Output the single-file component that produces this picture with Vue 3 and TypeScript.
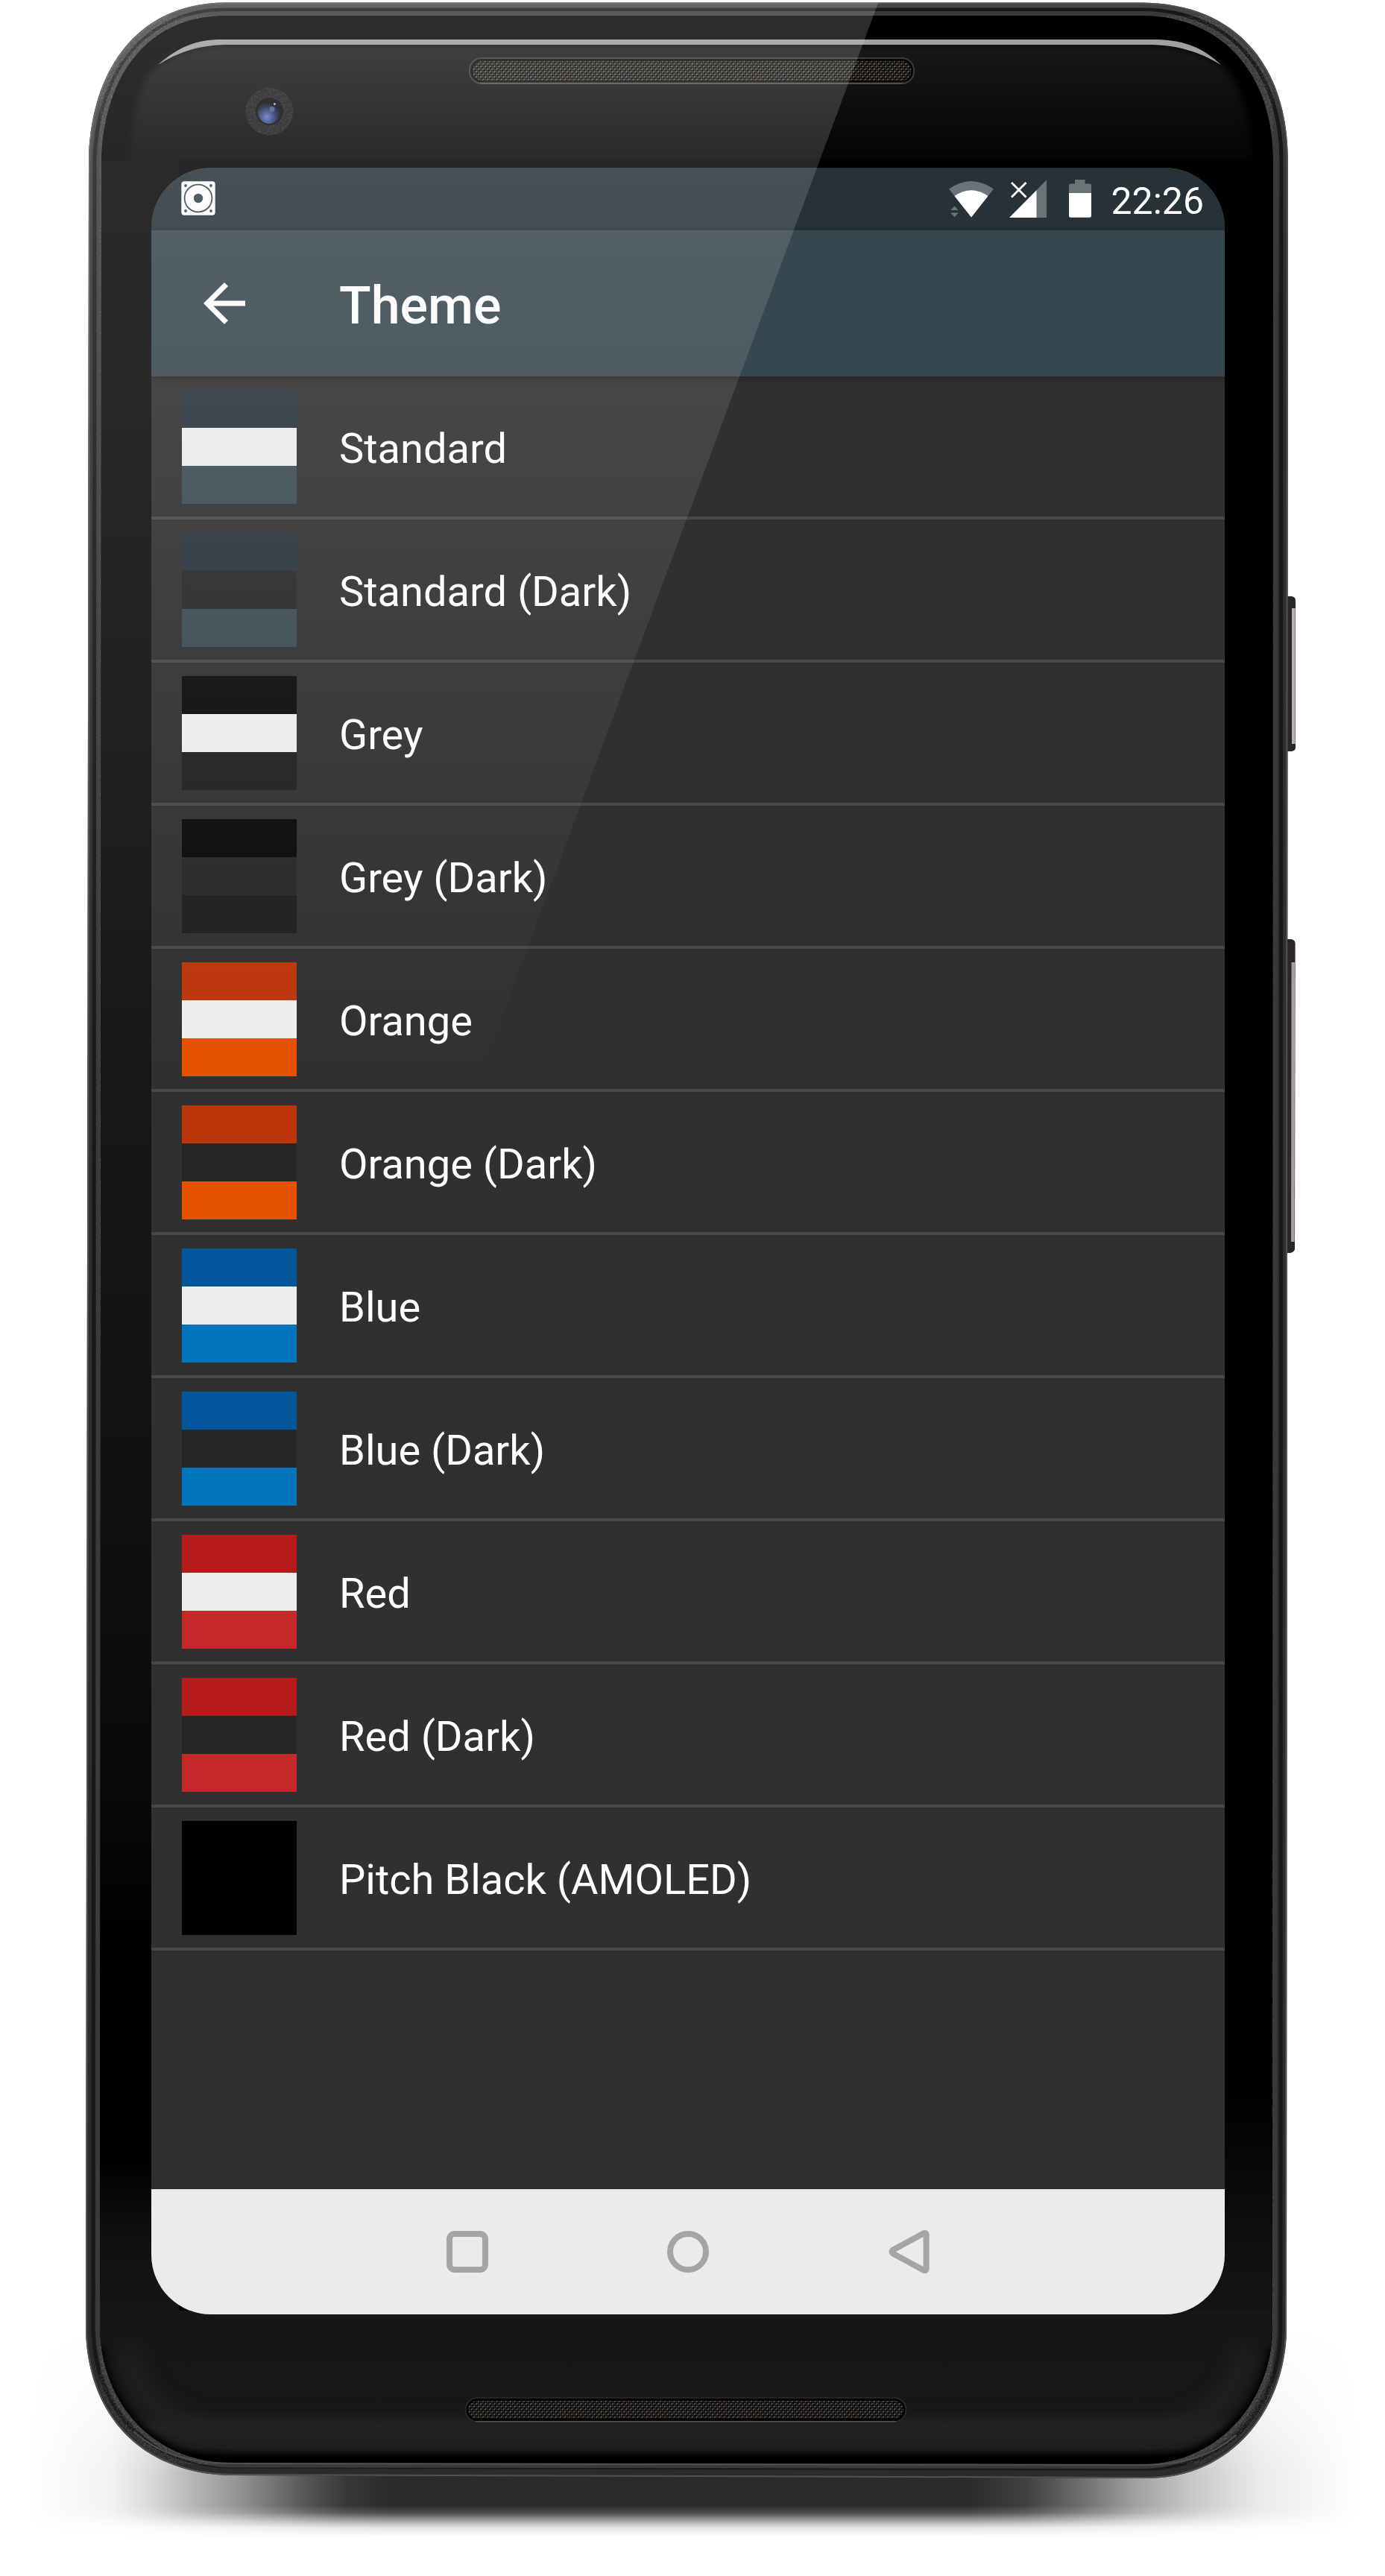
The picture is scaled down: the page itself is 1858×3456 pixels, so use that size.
<script setup lang="ts">
interface Theme {
  name: string
  stripes: [string, string, string]
}

const light = '#eeeeee'
const dark = '#272727'

const themes: Theme[] = [
  { name: 'Standard', stripes: ['#28323c', light, '#3a4a52'] },
  { name: 'Standard (Dark)', stripes: ['#28323c', dark, '#3a4a52'] },
  { name: 'Grey', stripes: ['#0a0a0a', light, '#1f1f1f'] },
  { name: 'Grey (Dark)', stripes: ['#090909', dark, '#1e1e1e'] },
  { name: 'Orange', stripes: ['#bc350a', light, '#e65100'] },
  { name: 'Orange (Dark)', stripes: ['#bc350a', dark, '#e65100'] },
  { name: 'Blue', stripes: ['#01569c', light, '#0176be'] },
  { name: 'Blue (Dark)', stripes: ['#01569c', dark, '#0176be'] },
  { name: 'Red', stripes: ['#b41b19', light, '#c42829'] },
  { name: 'Red (Dark)', stripes: ['#b41b19', dark, '#c42829'] },
  { name: 'Pitch Black (AMOLED)', stripes: ['#000000', '#000000', '#000000'] },
]

const shell =
  'M119 215 C121 100 180 3.5 303 3.5 H1533 C1660 5 1728 90 1728 215 L1726 3130 C1722 3235 1652 3325 1538 3325 L315 3321 C190 3321 118 3240 115 3127 Z'
const groove =
  'M127 215 C129 108 188 13 303 13 H1533 C1652 14 1719 98 1719 215 L1718 3130 C1714 3232 1646 3312 1536 3312 L315 3309 C198 3309 128 3234 125 3127 Z'
const face =
  'M136 215 C139 104 196 21 303 21 H1533 C1644 22 1708 104 1708 215 L1707 3130 C1703 3222 1636 3306 1530 3306 L315 3304.5 C206 3304.5 138 3226 134 3127 Z'
</script>

<template>
  <main class="stage">
    <svg class="art" viewBox="0 0 1858 3456" aria-hidden="true">
      <defs>
        <linearGradient id="shadowX">
          <stop offset="0.02" stop-color="#000" stop-opacity="0" />
          <stop offset="0.08" stop-color="#000" stop-opacity="0.05" />
          <stop offset="0.11" stop-color="#000" stop-opacity="0.15" />
          <stop offset="0.14" stop-color="#000" stop-opacity="0.29" />
          <stop offset="0.17" stop-color="#000" stop-opacity="0.41" />
          <stop offset="0.2" stop-color="#000" stop-opacity="0.56" />
          <stop offset="0.225" stop-color="#000" stop-opacity="0.68" />
          <stop offset="0.25" stop-color="#000" stop-opacity="0.78" />
          <stop offset="0.28" stop-color="#000" stop-opacity="0.83" />
          <stop offset="0.7" stop-color="#000" stop-opacity="0.83" />
          <stop offset="0.74" stop-color="#000" stop-opacity="0.75" />
          <stop offset="0.785" stop-color="#000" stop-opacity="0.55" />
          <stop offset="0.82" stop-color="#000" stop-opacity="0.37" />
          <stop offset="0.86" stop-color="#000" stop-opacity="0.22" />
          <stop offset="0.91" stop-color="#000" stop-opacity="0.08" />
          <stop offset="0.98" stop-color="#000" stop-opacity="0" />
        </linearGradient>
        <linearGradient id="shadowY" gradientUnits="userSpaceOnUse" x1="0" y1="3120" x2="0" y2="3404">
          <stop offset="0" stop-color="#fff" stop-opacity="0" />
          <stop offset="0.35" stop-color="#fff" stop-opacity="0.35" />
          <stop offset="0.7" stop-color="#fff" stop-opacity="1" />
          <stop offset="0.85" stop-color="#fff" stop-opacity="1" />
          <stop offset="0.885" stop-color="#fff" stop-opacity="0.84" />
          <stop offset="0.92" stop-color="#fff" stop-opacity="0.46" />
          <stop offset="0.955" stop-color="#fff" stop-opacity="0.12" />
          <stop offset="1" stop-color="#fff" stop-opacity="0" />
        </linearGradient>
        <mask id="shadowMask" maskUnits="userSpaceOnUse" x="0" y="3100" width="1858" height="320">
          <rect y="3100" width="1858" height="320" fill="url(#shadowY)" />
        </mask>
        <linearGradient id="rim" x1="0" y1="0" x2="0" y2="1">
          <stop offset="0" stop-color="#434343" />
          <stop offset="0.12" stop-color="#2e2e2e" />
          <stop offset="0.4" stop-color="#303030" />
          <stop offset="1" stop-color="#2b2b2b" />
        </linearGradient>
        <linearGradient id="leftBezel" gradientUnits="userSpaceOnUse" x1="0" y1="215" x2="0" y2="3130">
          <stop offset="0" stop-color="#050505" />
          <stop offset="0.1" stop-color="#0d0d0d" />
          <stop offset="0.3" stop-color="#151515" />
          <stop offset="0.44" stop-color="#171717" />
          <stop offset="0.61" stop-color="#111" />
          <stop offset="0.75" stop-color="#090909" />
          <stop offset="0.82" stop-color="#000" />
          <stop offset="0.92" stop-color="#000" />
          <stop offset="0.96" stop-color="#111" />
          <stop offset="1" stop-color="#161616" />
        </linearGradient>
        <linearGradient id="rightBezel" gradientUnits="userSpaceOnUse" x1="0" y1="2800" x2="0" y2="3130">
          <stop offset="0" stop-color="#000" />
          <stop offset="0.7" stop-color="#111" />
          <stop offset="1" stop-color="#151515" />
        </linearGradient>
        <linearGradient id="chin" gradientUnits="userSpaceOnUse" x1="0" y1="3100" x2="0" y2="3305">
          <stop offset="0" stop-color="#161616" />
          <stop offset="0.66" stop-color="#171717" />
          <stop offset="0.77" stop-color="#232323" />
          <stop offset="0.9" stop-color="#1c1c1c" />
          <stop offset="0.96" stop-color="#020202" />
          <stop offset="1" stop-color="#000" />
        </linearGradient>
        <linearGradient id="brow" gradientUnits="userSpaceOnUse" x1="0" y1="60" x2="0" y2="215">
          <stop offset="0" stop-color="#181818" />
          <stop offset="1" stop-color="#040404" />
        </linearGradient>
        <radialGradient id="lens" cx="0.4" cy="0.72" r="0.62">
          <stop offset="0" stop-color="#6279c4" />
          <stop offset="0.35" stop-color="#3c4d93" />
          <stop offset="0.75" stop-color="#171b38" />
          <stop offset="1" stop-color="#08080f" />
        </radialGradient>
        <pattern id="weave" width="6.1" height="7" patternUnits="userSpaceOnUse">
          <path d="M0.6 2.8 L2.4 0.6 M3.7 6.3 L5.5 4.1" stroke="#807867" stroke-width="1.45" />
          <path d="M3.6 0.6 L5.2 2.8 M0.6 4.1 L2.2 6.3" stroke="#423f37" stroke-width="1.2" />
        </pattern>
        <filter id="soft" x="-5%" y="-5%" width="110%" height="110%" color-interpolation-filters="sRGB">
          <feGaussianBlur stdDeviation="5" />
        </filter>
        <filter id="softWide" x="-10%" y="-30%" width="120%" height="160%" color-interpolation-filters="sRGB">
          <feGaussianBlur stdDeviation="12" />
        </filter>
        <filter id="grain" x="0" y="0" width="100%" height="100%">
          <feTurbulence type="fractalNoise" baseFrequency="0.45" numOctaves="2" seed="4" />
          <feColorMatrix values="0 0 0 0 1  0 0 0 0 1  0 0 0 0 1  1.6 0 0 0 -0.65" />
          <feComposite in2="SourceGraphic" operator="in" />
        </filter>
        <clipPath id="faceClip"><path :d="face" /></clipPath>
        <clipPath id="shellClip"><path :d="shell" /></clipPath>
        <clipPath id="browClip"><rect x="130" y="20" width="1580" height="195" /></clipPath>
      </defs>

      <rect y="3110" width="1858" height="300" fill="url(#shadowX)" mask="url(#shadowMask)" />

      <!-- side keys -->
      <g>
        <path d="M1726 800 H1733 Q1738 801 1738 806 V1003 Q1738 1007 1733 1008 H1726 Z" fill="#2b2628" />
        <rect x="1733" y="816" width="4.6" height="182" fill="#b9aeb0" />
        <path d="M1725 1260 H1732 Q1737.6 1261 1737.6 1266 L1737 1676 Q1736 1680 1731 1681 H1725 Z" fill="#2b2628" />
        <path d="M1732.5 1291 H1737.2 L1736.6 1666 H1732 Z" fill="#a89da0" />
      </g>

      <path :d="shell" fill="url(#rim)" />
      <g clip-path="url(#shellClip)">
        <path :d="shell" fill="none" stroke="#505252" stroke-width="4" />
        <path :d="groove" fill="none" stroke="#181818" stroke-width="5" />
        <path :d="face" fill="none" stroke="#3a3a3a" stroke-width="12" />
        <path :d="face" fill="none" stroke="#fff" stroke-width="34" filter="url(#grain)" opacity="0.25" />
      </g>

      <path :d="face" fill="#000" />
      <g clip-path="url(#faceClip)">
        <rect x="100" y="215" width="140" height="2915" fill="url(#leftBezel)" />
        <rect x="1600" y="2800" width="140" height="330" fill="url(#rightBezel)" />
        <rect x="100" y="3100" width="1640" height="210" fill="url(#chin)" />
        <path
          d="M172 3150 C178 3215 225 3262 315 3262 H1530 C1615 3262 1664 3215 1670 3150"
          fill="none" stroke="#222" stroke-width="24" filter="url(#softWide)"
        />
        <path
          d="M130 3150 C140 3232 206 3307 315 3307 H1530 C1636 3307 1700 3226 1711 3150"
          fill="none" stroke="#000" stroke-width="18" filter="url(#soft)"
        />
        <g clip-path="url(#browClip)">
          <path
            d="M174 260 C174 150 188 104 212 87 C240 69 268 60 300 60 H1540 C1580 60 1610 70 1638 87 C1666 110 1681 160 1682 260 Z"
            fill="url(#brow)" filter="url(#soft)"
          />
        </g>
        <rect x="290" y="48" width="1262" height="5" fill="#000" />
      </g>
      <path d="M179 3262 C210 3290 250 3305 315 3305 L1530 3307 C1585 3307 1625 3296 1658 3267" fill="none" stroke="#505050" stroke-width="2" />
      <path
        d="M212 87 C238 64 262 53 297 53 H1552 C1592 54 1616 66 1638 87 C1610 70 1580 60 1540 60 H300 C268 61 240 69 212 87 Z"
        fill="#a0a0a0"
      />

      <!-- front camera -->
      <circle cx="361.4" cy="149.5" r="32" fill="#191617" />
      <circle cx="361.4" cy="149.5" r="32" fill="#fff" filter="url(#grain)" opacity="0.16" />
      <circle cx="361.4" cy="149.5" r="18.5" fill="#090909" />
      <ellipse cx="361" cy="150" rx="15.5" ry="16" fill="url(#lens)" />
      <circle cx="365" cy="146.5" r="3.5" fill="#4d6a91" opacity="0.8" />
      <circle cx="368.4" cy="139.6" r="1.4" fill="#e9b6dc" />

      <!-- speakers -->
      <rect x="630" y="78" width="596" height="34" rx="16" fill="#060606" stroke="#3a3a3a" stroke-width="2" />
      <path d="M644 111.5 H1212" stroke="#5a5954" stroke-width="1.5" />
      <rect x="634" y="82" width="588" height="26" rx="12" fill="url(#weave)" />
      <rect x="624.5" y="3217" width="591" height="32" rx="16" fill="#050505" stroke="#2d2d2d" stroke-width="1.6" />
      <path d="M638 3248.8 H1202" stroke="#56504c" stroke-width="1.5" />
      <rect x="628" y="3221" width="584" height="24" rx="12" fill="url(#weave)" opacity="0.9" />
    </svg>

    <section class="screen">
      <header class="status">
        <svg class="app-mark" viewBox="0 0 46 46">
          <rect x="0.3" y="0.3" width="45.4" height="45.4" rx="4" fill="#fff" />
          <g fill="#36434a">
            <circle cx="6" cy="6" r="1.9" />
            <circle cx="40" cy="6" r="1.9" />
            <circle cx="6" cy="40" r="1.9" />
            <circle cx="40" cy="40" r="1.9" />
            <circle cx="23" cy="23" r="6.2" />
          </g>
          <circle cx="23" cy="23" r="18.4" fill="none" stroke="#36434a" stroke-width="1.8" />
        </svg>
        <div class="indicators">
          <svg class="wifi" viewBox="0 0 62 52">
            <path d="M1 13.5 Q31 -7.5 61 13.5 L31 51.5 Z" fill="#6b7376" />
            <path d="M8.5 23 Q31 7.5 53.5 23 L31 51.5 Z" fill="#fff" />
            <path d="M8.5 36.5 L13.7 42 H3.3 Z M3.3 45.6 H13.7 L8.5 51.2 Z" fill="#6b7376" />
          </svg>
          <svg class="signal" viewBox="0 0 50 52">
            <path d="M0 52 L50 1.5 V52 Z" fill="#6b7376" />
            <path d="M0 52 L36.5 15.2 V52 Z" fill="#fff" />
            <path d="M3 5 L22.5 24.5 M22.5 5 L3 24.5" fill="none" stroke="#fff" stroke-width="2.8" />
          </svg>
          <svg class="battery" viewBox="0 0 30 52">
            <path d="M8 1 H21.5 V6.5 H28 Q30 6.5 30 8.5 V20 H0 V8.5 Q0 6.5 2 6.5 H8 Z" fill="#6b7376" />
            <path d="M0 19 H30 V49.5 Q30 51.8 28 51.8 H2 Q0 51.8 0 49.5 Z" fill="#fff" />
          </svg>
          <span class="clock">22:26</span>
        </div>
      </header>

      <div class="app-bar">
        <svg class="back" viewBox="0 0 24 24">
          <path d="M20 11H7.830l5.590-5.590L12 4l-8 8 8 8 1.410-1.410L7.830 13H20v-2z" fill="#fff" />
        </svg>
        <h1 class="title">Theme</h1>
      </div>

      <ul class="themes">
        <li v-for="theme in themes" :key="theme.name" class="row">
          <div class="swatch">
            <span
              v-for="(color, i) in theme.stripes"
              :key="i"
              class="stripe"
              :style="{ background: color }"
            ></span>
          </div>
          <span class="label">{{ theme.name }}</span>
        </li>
      </ul>

      <nav class="nav">
        <svg viewBox="0 0 60 60">
          <rect x="6" y="6" width="48" height="48" rx="7" />
        </svg>
        <svg viewBox="0 0 60 60">
          <circle cx="30" cy="30" r="24" />
        </svg>
        <svg viewBox="0 0 60 60">
          <path d="M9.5 27.3 L50 5.3 Q53.6 4 53.6 7.5 V52.5 Q53.6 56 50 54.7 L9.5 32.7 Q5.8 30 9.5 27.3 Z" />
        </svg>
      </nav>
    </section>

    <svg class="art glare" viewBox="0 0 1858 3456" aria-hidden="true">
      <defs>
        <linearGradient id="glareFade" gradientUnits="userSpaceOnUse" x1="0" y1="0" x2="0" y2="1450">
          <stop offset="0" stop-color="#e6e6e6" stop-opacity="0.2" />
          <stop offset="0.2" stop-color="#e6e6e6" stop-opacity="0.155" />
          <stop offset="0.48" stop-color="#e6e6e6" stop-opacity="0.1" />
          <stop offset="0.76" stop-color="#e6e6e6" stop-opacity="0.045" />
          <stop offset="1" stop-color="#e6e6e6" stop-opacity="0" />
        </linearGradient>
        <clipPath id="glareClip"><path :d="shell" /></clipPath>
      </defs>
      <path d="M0 0 H1179.5 L641.5 1450 H0 Z" fill="url(#glareFade)" clip-path="url(#glareClip)" />
    </svg>
  </main>
</template>

<style>
body {
  margin: 0;
  background: #fff;
}
</style>

<style scoped>
.stage {
  position: relative;
  box-sizing: border-box;
  width: 1858px;
  height: 3456px;
  padding: 225px 215px 0 203px;
  overflow: hidden;
  background: #fff;
  font-family: Roboto, sans-serif;
}

.art {
  position: absolute;
  inset: 0;
  width: 1858px;
  height: 3456px;
}

.glare {
  pointer-events: none;
}

.screen {
  position: relative;
  display: flex;
  flex-direction: column;
  width: 1440px;
  height: 2880px;
  border-radius: 80px;
  overflow: hidden;
  background: #303030;
  color: #fff;
}

.status {
  display: flex;
  flex: none;
  justify-content: space-between;
  height: 84px;
  box-sizing: border-box;
  padding: 0 28px 0 40px;
  background: #263238;
}

.app-mark {
  width: 46px;
  height: 46px;
  margin-top: 18px;
}

.indicators {
  display: flex;
  align-items: flex-start;
}

.wifi {
  width: 62px;
  height: 52px;
  margin: 15px 20px 0 0;
}

.signal {
  width: 50px;
  height: 52px;
  margin: 15px 30px 0 0;
}

.battery {
  width: 30px;
  height: 52px;
  margin: 15px 26px 0 0;
}

.clock {
  font-size: 50px;
  line-height: 60px;
  margin-top: 15px;
}

.app-bar {
  display: flex;
  flex: none;
  align-items: center;
  height: 196px;
  box-sizing: border-box;
  padding-left: 56px;
  background: #37474f;
  box-shadow: 0 2px 10px rgba(0, 0, 0, 0.35);
}

.back {
  width: 84px;
  height: 84px;
}

.title {
  margin: 0 0 0 112px;
  padding-top: 6px;
  font-size: 70px;
  font-weight: 500;
  line-height: 82px;
}

.themes {
  flex: 1;
  margin: 0;
  padding: 0;
  list-style: none;
}

.row {
  display: flex;
  align-items: center;
  box-sizing: border-box;
  height: 192px;
  padding-left: 41px;
  border-bottom: 4px solid #474747;
}

.swatch {
  display: flex;
  flex-direction: column;
  width: 154px;
  height: 153px;
}

.stripe {
  flex: 1;
}

.label {
  margin-left: 57px;
  padding-top: 5px;
  font-size: 56px;
  line-height: 66px;
  white-space: nowrap;
}

.nav {
  display: flex;
  flex: none;
  align-items: center;
  justify-content: center;
  gap: 236px;
  height: 168px;
  background: #ebebeb;
}

.nav svg {
  width: 60px;
  height: 60px;
  fill: none;
  stroke: #a5a5a5;
  stroke-width: 8;
}
</style>
